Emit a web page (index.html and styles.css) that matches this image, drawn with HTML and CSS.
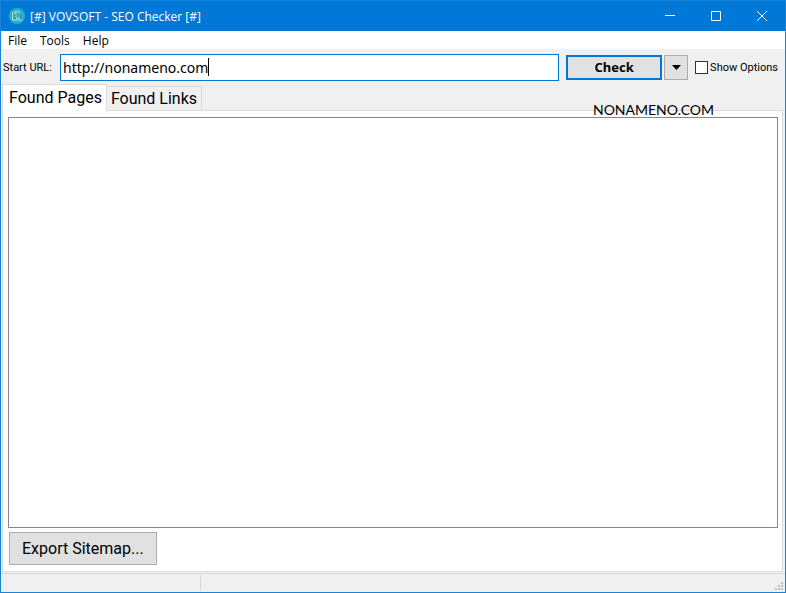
FILE: index.html
```html
<!DOCTYPE html>
<html lang="en">
<head>
<meta charset="utf-8">
<title>[#] VOVSOFT - SEO Checker [#]</title>
<link rel="stylesheet" href="styles.css">
</head>
<body>
<div class="window">
  <header class="titlebar">
    <svg class="logo" viewBox="0 0 16 16" aria-hidden="true">
      <circle cx="8" cy="8" r="8" fill="#22b3c9"/>
      <path d="M5 3h6v8H5z" fill="#7fd3dc"/>
      <path d="M3.500 4v8H13" fill="none" stroke="#a9e0e6" stroke-width="1"/>
      <path d="M7.500 4.500h3v5h-3z" fill="#3da0b4"/>
      <path d="M5 9h2v2H5z" fill="#2596ab"/>
      <path d="M11 7h1v4h-1z" fill="#16829c"/>
      <path d="M4.500 8.500 6.500 6.500" stroke="#c2604c" stroke-width="1.200"/>
    </svg>
    <h1 class="title">[#] VOVSOFT - SEO Checker [#]</h1>
    <div class="controls">
      <button class="control" type="button" aria-label="Minimize"><svg viewBox="0 0 10 10"><path d="M0 4.500h10"/></svg></button>
      <button class="control" type="button" aria-label="Maximize"><svg viewBox="0 0 10 10"><path d="M.5.5h9v9h-9z"/></svg></button>
      <button class="control" type="button" aria-label="Close"><svg viewBox="0 0 10 10"><path d="M0 0l10 10M10 0L0 10"/></svg></button>
    </div>
  </header>
  <nav class="menu">
    <button type="button">File</button>
    <button type="button">Tools</button>
    <button type="button">Help</button>
  </nav>
  <form class="toolbar">
    <label class="url-label" for="url">Start URL:</label>
    <div class="url-box">
      <input id="url" type="text" value="http://nonameno.com" spellcheck="false">
      <span class="caret"></span>
    </div>
    <button class="btn check" type="button">Check</button>
    <button class="btn drop" type="button" aria-label="More check actions"><svg viewBox="0 0 9 5"><path d="M0 0h9L4.500 5z"/></svg></button>
    <label class="options"><input type="checkbox"><span>Show Options</span></label>
  </form>
  <div class="tabs" role="tablist">
    <button class="tab active" type="button" role="tab" aria-selected="true">Found Pages</button>
    <button class="tab" type="button" role="tab" aria-selected="false">Found Links</button>
    <span class="watermark">NONAMENO.COM</span>
  </div>
  <main class="panel">
    <div class="list"></div>
    <button class="btn export" type="button">Export Sitemap...</button>
  </main>
  <footer class="status">
    <div class="status-cell"></div>
    <svg class="grip" viewBox="0 0 8 8" aria-hidden="true"><path d="M6 0h2v2H6zM3 3h2v2H3zM6 3h2v2H6zM0 6h2v2H0zM3 6h2v2H3zM6 6h2v2H6z"/></svg>
  </footer>
</div>
</body>
</html>
```
FILE: styles.css
```css
* {
  box-sizing: border-box;
}

body {
  margin: 0;
  font-family: "Noto Sans", "Open Sans", sans-serif;
  font-size: 12px;
  color: #000;
}

button,
input {
  margin: 0;
  padding: 0;
  border: 0;
  background: none;
  font: inherit;
  color: inherit;
}

.window {
  display: flex;
  flex-direction: column;
  height: 100vh;
  border: 1px solid #1883d7;
  background: #f0f0f0;
}

.titlebar {
  display: flex;
  align-items: center;
  height: 30px;
  flex: none;
  padding-left: 8px;
  background: #0078d7;
  color: #fff;
}

.logo {
  width: 16px;
  height: 16px;
  margin-right: 5px;
}

.title {
  flex: 1;
  margin: 0;
  font-family: "Open Sans", sans-serif;
  font-size: 12px;
  font-weight: 400;
}

.controls {
  display: flex;
}

.control {
  display: flex;
  align-items: center;
  justify-content: center;
  width: 46px;
  height: 30px;
}

.control svg {
  width: 10px;
  height: 10px;
  fill: none;
  stroke: #fff;
}

.menu {
  display: flex;
  gap: 13px;
  height: 18px;
  flex: none;
  padding-left: 7px;
  background: #fff;
  font-family: "Open Sans", sans-serif;
  line-height: 20px;
}

.toolbar {
  display: flex;
  align-items: center;
  height: 35px;
  flex: none;
  padding: 1px 7px 0 2px;
  font-size: 11px;
}

.url-label {
  width: 57px;
  font-family: Roboto, sans-serif;
  white-space: nowrap;
}

.url-box {
  display: flex;
  align-items: center;
  flex: 1;
  height: 27px;
  padding-left: 2px;
  border: 1px solid #0078d7;
  background: #fff;
  font-size: 14px;
}

.url-box input {
  field-sizing: content;
  height: 25px;
  outline: 0;
}

.caret {
  width: 1px;
  height: 18px;
  background: #000;
}

.btn {
  border: 1px solid #adadad;
  background: #e1e1e1;
}

.check {
  width: 96px;
  height: 25px;
  margin-left: 7px;
  border: 2px solid #0078d7;
  font-size: 13px;
  font-weight: 700;
  line-height: 21px;
}

.drop {
  display: flex;
  align-items: center;
  justify-content: center;
  width: 24px;
  height: 25px;
  margin: 0 7px 0 2px;
}

.drop svg {
  width: 9px;
  height: 5px;
}

.options {
  display: flex;
  align-items: center;
  gap: 2px;
  font-family: Roboto, sans-serif;
  white-space: nowrap;
}

.options input {
  appearance: none;
  width: 13px;
  height: 13px;
  border: 1px solid #333;
  background: #fff;
}

.tabs {
  position: relative;
  display: flex;
  align-items: flex-end;
  height: 26px;
  flex: none;
  padding-left: 1px;
  font-family: Roboto, sans-serif;
  font-size: 16px;
}

.tab {
  height: 24px;
  padding: 0 4px;
  border: 1px solid #dcdcdc;
  border-width: 1px 1px 0 0;
  line-height: 24px;
  white-space: nowrap;
}

.tab.active {
  z-index: 1;
  height: 27px;
  margin-bottom: -1px;
  padding: 0 4px 0 6px;
  border-left-width: 1px;
  background: #fff;
}

.watermark {
  position: absolute;
  z-index: 1;
  right: 71px;
  bottom: -10px;
  font-family: Lato, sans-serif;
  font-size: 14px;
  line-height: 20px;
}

.panel {
  display: flex;
  flex-direction: column;
  align-items: flex-start;
  gap: 4px;
  flex: 1;
  margin: 0 2px 1px 1px;
  padding: 6px 4px 6px 5px;
  border: 1px solid #dcdcdc;
  background: #fff;
}

.list {
  flex: 1;
  align-self: stretch;
  border: 1px solid #828790;
}

.export {
  height: 33px;
  margin-left: 1px;
  padding: 0 12px;
  font-family: Roboto, sans-serif;
  font-size: 16px;
}

.status {
  display: flex;
  align-items: flex-end;
  justify-content: space-between;
  height: 19px;
  flex: none;
  padding: 1px 2px 1px 0;
  border-top: 1px solid #d7d7d7;
}

.status-cell {
  width: 200px;
  height: 16px;
  border-right: 1px solid #d7d7d7;
}

.grip {
  width: 8px;
  height: 8px;
  margin-bottom: 1px;
  fill: #bfbfbf;
}
```
